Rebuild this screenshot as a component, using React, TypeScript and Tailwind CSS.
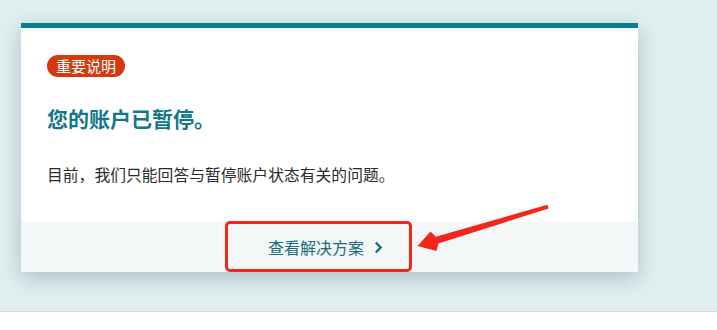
import React from "react";

const font = { fontFamily: '"Noto Sans CJK SC", "Noto Sans", sans-serif' };

function Arrow() {
  return (
    <svg
      className="absolute left-[410px] top-[200px]"
      width="145"
      height="55"
      viewBox="0 0 145 55"
    >
      <polygon
        points="137.4,4.8 138.6,8.4 28.4,43.4 26.5,51 7.5,46 20.5,31.5 25.8,36.8"
        fill="#f2261a"
      />
    </svg>
  );
}

export default function App() {
  return (
    <div className="w-[717px] h-[330px] bg-white" style={font}>
      <div className="relative h-[312px] bg-[#e2eff1] border-b border-[#cfdcde] pt-[23px] pl-[21px]">
        <div className="w-[617px] bg-white border-t-[5px] border-[#077f90] shadow-[0_6px_22px_rgba(20,70,80,0.28)]">
          <div className="px-[26px] pt-[25px] pb-[35px]">
            <span className="inline-flex items-center h-[22px] px-[9px] rounded-full bg-[#d8380f] text-white text-[15px] leading-none">
              重要说明
            </span>
            <h1 className="mt-[27px] text-[21px] leading-[28px] font-bold text-[#12778a]">
              您的账户已暂停。
            </h1>
            <p className="mt-[31px] text-[15.8px] leading-[24px] text-[#2b2b2b]">
              目前，我们只能回答与暂停账户状态有关的问题。
            </p>
          </div>
          <div className="relative h-[50px] bg-[#f3f7f8] flex items-center justify-center">
            <a className="flex items-center gap-[10px] text-[16px] text-[#1b6c7c] pr-[8px]">
              查看解决方案
              <svg width="9" height="13" viewBox="0 0 9 13">
                <path d="M1.8 1.5 L6.6 6.5 L1.8 11.5" fill="none" stroke="#1b6c7c" strokeWidth="2.4" />
              </svg>
            </a>
            <div className="absolute left-[204px] top-[-1px] w-[187px] h-[51px] border-[3px] border-[#f0281c] rounded-[5px]" />
          </div>
        </div>
        <Arrow />
      </div>
    </div>
  );
}
